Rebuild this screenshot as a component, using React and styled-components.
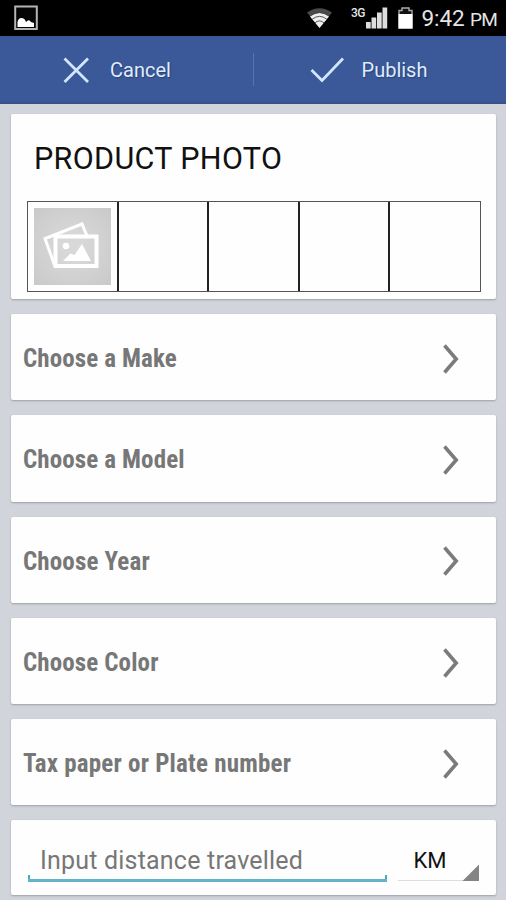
import React from 'react';
import styled, { createGlobalStyle } from 'styled-components';

const GlobalStyle = createGlobalStyle`
  * {
    box-sizing: border-box;
  }

  body {
    margin: 0;
    background-color: #d1d4da;
    font-family: Roboto, 'Liberation Sans', sans-serif;
    overflow: hidden;
  }
`;

const Screen = styled.div`
  width: 506px;
  height: 900px;
  overflow: hidden;
  background-color: #d1d4da;
`;

const StatusBar = styled.header`
  display: flex;
  align-items: center;
  height: 36px;
  padding-left: 14px;
  background-color: #000;
  color: #e4e4e4;
`;

const StatusIcons = styled.svg`
  display: block;
  flex-shrink: 0;
  margin-left: ${({ $gap }) => `${$gap || 0}px`};
`;

const NetworkType = styled.span`
  align-self: flex-start;
  width: 14px;
  margin: 6px 0 0 18px;
  font-size: 12px;
  font-weight: 500;
  line-height: 14px;
  letter-spacing: -0.6px;
`;

const Clock = styled.span`
  margin-left: 9px;
  padding-top: 2px;
  font-size: 22.5px;
  line-height: 36px;
  letter-spacing: -0.1px;
  white-space: nowrap;

  small {
    margin-left: 0;
    font-size: 19px;
    letter-spacing: -0.8px;
  }
`;

const ActionBar = styled.nav`
  display: flex;
  align-items: center;
  height: 68px;
  background-color: #3b5899;
  border-bottom: 2px solid #3a4f87;
`;

const Action = styled.button`
  display: flex;
  align-items: center;
  width: 253px;
  height: 100%;
  padding: 2px 0 0 ${({ $inset }) => `${$inset}px`};
  border: 0;
  background: none;
  color: #dfecff;
  font-family: inherit;
  font-size: 20px;
  text-shadow: 1px 1px 1px #2a4174;
`;

const ActionLabel = styled.span`
  margin-left: ${({ $gap }) => `${$gap}px`};
`;

const Divider = styled.span`
  width: 1px;
  height: 33px;
  background-color: #5b73aa;
`;

const Form = styled.main`
  display: flex;
  flex-direction: column;
  gap: 15px;
  padding: 10px 10.5px 0 11.4px;
`;

const Card = styled.section`
  height: ${({ $height }) => `${$height}px`};
  flex-shrink: 0;
  background-color: #fefefe;
  border-radius: 2px;
  box-shadow: 0 1px 2px rgba(70, 75, 85, 0.38);
`;

const PhotoCard = styled(Card)`
  padding: 25px 15px 0 15.6px;
`;

const PhotoTitle = styled.h1`
  height: 40px;
  margin: 0 0 22px;
  padding-left: 7px;
  font-size: 30.5px;
  font-weight: 400;
  line-height: 40px;
  letter-spacing: 0.35px;
  color: #111;
`;

const PhotoGrid = styled.div`
  display: grid;
  grid-template-columns: 90px repeat(4, 1fr);
  width: 454px;
  height: 91px;
  border: 1px solid #555;
`;

const PhotoSlot = styled.div`
  display: flex;
  align-items: center;
  justify-content: center;

  & + & {
    margin-left: -1px;
    border-left: 2px solid #222;
  }
`;

const Placeholder = styled.div`
  width: 77px;
  height: 77px;
  margin-right: 1px;
  background: radial-gradient(circle, #d8d8d8 20%, #c9c9c9 100%);
`;

const Row = styled(Card)`
  display: flex;
  align-items: center;
  justify-content: space-between;
  padding: 3px 37px 0 11.5px;
`;

const RowLabel = styled.span`
  font-family: 'Roboto Condensed', Roboto, sans-serif;
  font-size: 25px;
  font-weight: 700;
  font-stretch: condensed;
  letter-spacing: ${({ $tracking }) => `${$tracking}px`};
  color: #777;
  white-space: nowrap;
`;

const DistanceRow = styled(Card)`
  display: flex;
  padding: 19px 16px 0 16.6px;
`;

const DistanceField = styled.div`
  position: relative;
  width: 359px;
  height: 43px;
  padding-left: 12px;
  font-size: 25px;
  line-height: 43px;
  letter-spacing: 0.2px;
  color: #777;
  border-bottom: 3px solid #64b4c8;
  white-space: nowrap;

  /* short upright ticks at both ends of the underline */
  &::before,
  &::after {
    content: '';
    position: absolute;
    bottom: 0;
    width: 2px;
    height: 4px;
    background-color: #4fa9be;
  }

  &::before {
    left: 0;
  }

  &::after {
    right: 0;
  }
`;

const UnitSelect = styled.div`
  display: flex;
  justify-content: space-between;
  align-items: flex-end;
  width: 81px;
  height: 42px;
  margin-left: 11px;
  padding-left: 15.5px;
  border-bottom: 1px solid #ddd;
  font-size: 22px;
  line-height: 38px;
  color: #111;
`;

const UnitCorner = styled.span`
  width: 17px;
  height: 17px;
  margin-bottom: -1px;
  background-color: #848484;
  clip-path: polygon(100% 0, 100% 100%, 0 100%);
`;

const rows = [
  { label: 'Choose a Make', tracking: 0.12 },
  { label: 'Choose a Model', tracking: 0.12 },
  { label: 'Choose Year', tracking: 0.15 },
  { label: 'Choose Color', tracking: 0.12 },
  { label: 'Tax paper or Plate number', tracking: 0.22 },
];

function GalleryIcon() {
  return (
    <svg width="77" height="77" viewBox="0 0 77 77" fill="none" stroke="#fff">
      <path d="M20.5 57 L11 30.5 L48 16 L53 28" strokeWidth="3" />
      <rect x="21.5" y="28.5" width="41" height="29.5" strokeWidth="4" />
      <circle cx="32" cy="38" r="3.3" fill="#fff" stroke="none" />
      <path d="M29 53 L36.5 45.5 L40.5 47 L48 36 L57 53 Z" fill="#fff" stroke="none" />
    </svg>
  );
}

function Chevron() {
  return (
    <svg width="16" height="30" viewBox="0 0 16 30" fill="none">
      <path d="M1.5 1.5 L13.2 15 L1.5 28.5" stroke="#7b7b7b" strokeWidth="3.6" />
    </svg>
  );
}

export default function App() {
  return (
    <>
      <GlobalStyle />
      <Screen>
        <StatusBar>
          <StatusIcons width="24" height="26" viewBox="0 0 24 26">
            <rect x="1.2" y="1.5" width="21.6" height="22.5" fill="#050505" stroke="#b4b4b4" strokeWidth="2" />
            <path d="M3.5 22 V17 Q4.5 12.5 8 13 Q11 13.5 12 17 Q15 13.5 17 17 L20 18 V22 Z" fill="#fff" />
          </StatusIcons>
          <StatusIcons $gap={268} width="27" height="22" viewBox="0 0 27 22">
            <path d="M13.5 21 L1 5.5 Q13.5 -3 26 5.5 Z" fill="#4a4a4a" />
            <path d="M13.5 21 L4 9.5 Q13.5 2.5 23 9.5 Z" fill="#eee" />
            <path d="M4 8.8 Q13.5 2 23 8.8 M6.2 12.2 Q13.5 6.5 20.8 12.2 M9 15.8 Q13.5 12 18 15.8" fill="none" stroke="#444" strokeWidth="0.9" />
          </StatusIcons>
          <NetworkType>3G</NetworkType>
          <StatusIcons $gap={1} width="22" height="22" viewBox="0 0 22 22" fill="#dedede">
            <rect x="0" y="15" width="4.7" height="6.5" />
            <rect x="5.5" y="10.5" width="4.7" height="11" />
            <rect x="11" y="5.5" width="4.7" height="16" />
            <rect x="16.5" y="0.5" width="4.7" height="21" />
          </StatusIcons>
          <StatusIcons $gap={9.5} width="15" height="22" viewBox="0 0 15 22">
            <path d="M1 21 V3.5 H4 V1 H11 V3.5 H14 V21 Z" fill="#111" stroke="#aaa" strokeWidth="1.4" />
            <rect x="0.5" y="7" width="14" height="14.5" fill="#fff" />
          </StatusIcons>
          <Clock>
            9:42 <small>PM</small>
          </Clock>
        </StatusBar>

        <ActionBar>
          <Action $inset={63}>
            <svg width="27" height="27" viewBox="0 0 27 27" fill="none">
              <path d="M1.5 1.5 L25 25 M25 1.5 L1.5 25" stroke="#d3e6ff" strokeWidth="2.8" />
            </svg>
            <ActionLabel $gap={20}>Cancel</ActionLabel>
          </Action>
          <Divider />
          <Action $inset={56}>
            <svg width="35" height="26" viewBox="0 0 35 26" fill="none">
              <path d="M1.5 13 L12 23.5 L33 1.5" stroke="#d3e6ff" strokeWidth="2.8" />
            </svg>
            <ActionLabel $gap={17}>Publish</ActionLabel>
          </Action>
        </ActionBar>

        <Form>
          <PhotoCard $height={185}>
            <PhotoTitle>PRODUCT PHOTO</PhotoTitle>
            <PhotoGrid>
              <PhotoSlot>
                <Placeholder>
                  <GalleryIcon />
                </Placeholder>
              </PhotoSlot>
              <PhotoSlot />
              <PhotoSlot />
              <PhotoSlot />
              <PhotoSlot />
            </PhotoGrid>
          </PhotoCard>

          {rows.map(({ label, tracking }) => (
            <Row key={label} $height={86.3}>
              <RowLabel $tracking={tracking}>{label}</RowLabel>
              <Chevron />
            </Row>
          ))}

          <DistanceRow $height={74.5}>
            <DistanceField>Input distance travelled</DistanceField>
            <UnitSelect>
              KM
              <UnitCorner />
            </UnitSelect>
          </DistanceRow>
        </Form>
      </Screen>
    </>
  );
}
